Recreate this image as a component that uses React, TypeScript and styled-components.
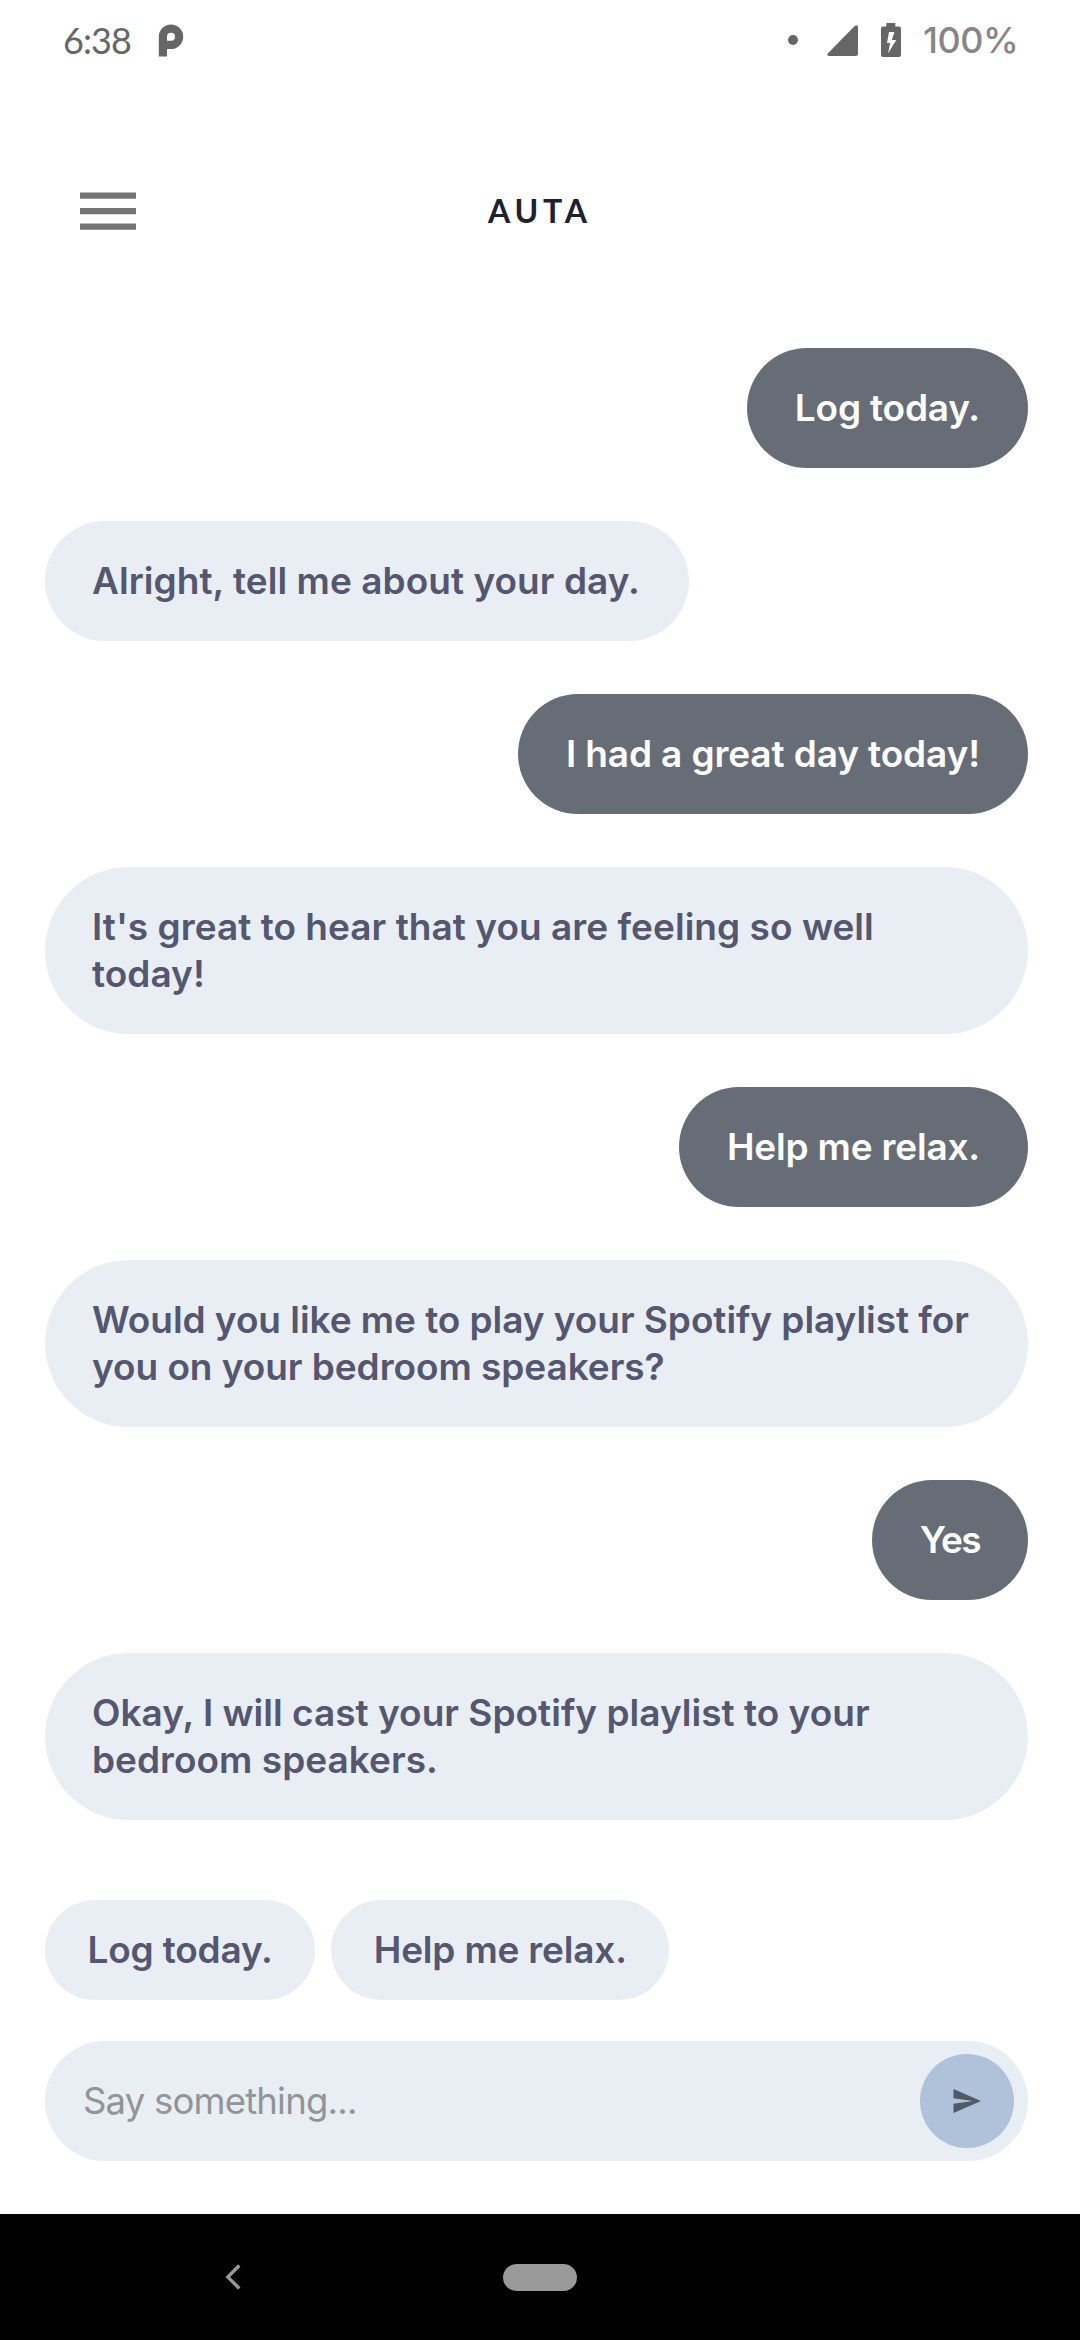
import React from 'react';
import styled, { createGlobalStyle } from 'styled-components';

const GlobalStyle = createGlobalStyle`
  * { box-sizing: border-box; }
  body { margin: 0; background: #fff; font-family: Inter, Roboto, sans-serif; }
`;

const Screen = styled.div`
  width: 1080px;
  height: 2340px;
  display: flex;
  flex-direction: column;
  background: #fff;
  overflow: hidden;
`;

const StatusBar = styled.div`
  height: 80px;
  flex: none;
  display: flex;
  align-items: center;
  justify-content: space-between;
  padding: 0 60px 0 63px;
`;

const StatusGroup = styled.div`
  display: flex;
  align-items: center;
  height: 80px;
`;

const Clock = styled.span`
  width: 95px;
  font: 400 36px/79px Lato, sans-serif;
  letter-spacing: -0.9px;
  color: #666;
`;

const BatteryLevel = styled.span`
  width: 97px;
  margin-left: 22px;
  font-size: 36px;
  font-weight: 500;
  line-height: 82px;
  letter-spacing: -0.5px;
  white-space: nowrap;
  color: #868686;
`;

const Notice = styled.i`
  width: 10px;
  height: 10px;
  border-radius: 50%;
  background: #666;
  margin-right: 29px;
`;

const Header = styled.header`
  height: 268px;
  flex: none;
  display: grid;
  grid-template-columns: 200px 1fr 200px;
  align-items: center;
  padding: 0 80px 6px;
`;

const MenuButton = styled.button`
  width: 56px;
  height: 38px;
  padding: 0;
  border: 0;
  background: none;
  display: flex;
`;

const Title = styled.h1`
  margin: 0;
  text-align: center;
  font: 700 32px/40px Lato, sans-serif;
  letter-spacing: 4.8px;
  color: #20202e;
`;

const Conversation = styled.main`
  height: 1552px;
  flex: none;
  display: flex;
  flex-direction: column;
  align-items: flex-start;
  gap: 53px;
  padding: 0 52px 0 45px;
`;

const Bubble = styled.div<{ $mine?: boolean; $tracking: number; $wide?: boolean }>`
  align-self: ${p => (p.$mine ? 'flex-end' : 'flex-start')};
  width: ${p => (p.$wide ? '983px' : 'auto')};
  padding: ${p => (p.$mine ? '36px 48px 37px' : '36px 49px 37px 47px')};
  border-radius: 84px;
  background: ${p => (p.$mine ? '#666d76' : '#e9eef5')};
  color: ${p => (p.$mine ? '#fff' : '#55566f')};
  font-size: 37px;
  font-weight: 600;
  line-height: 47px;
  letter-spacing: ${p => p.$tracking}px;
  white-space: pre;
`;

const Suggestions = styled.div`
  height: 141px;
  flex: none;
  display: flex;
  align-items: flex-start;
  gap: 16px;
  padding-left: 45px;
`;

const Chip = styled.button<{ $tracking: number }>`
  height: 100px;
  padding: 0 42.5px;
  border: 0;
  border-radius: 50px;
  background: #e9eef5;
  color: #55566f;
  font: 600 37px/98px Inter, sans-serif;
  letter-spacing: ${p => p.$tracking}px;
`;

const Composer = styled.form`
  height: 120px;
  flex: none;
  margin: 0 52px 53px 45px;
  padding: 0 14px 0 38px;
  border-radius: 60px;
  background: #e9eef5;
  display: flex;
  align-items: center;
  justify-content: space-between;
`;

const Placeholder = styled.span`
  font-size: 36.5px;
  line-height: 47px;
  letter-spacing: -0.8px;
  color: #919498;
`;

const SendButton = styled.button`
  width: 94px;
  height: 94px;
  padding: 0;
  border: 0;
  border-radius: 50%;
  background: #b0c1da;
  display: flex;
  align-items: center;
  justify-content: center;
`;

const NavBar = styled.nav`
  flex: 1;
  display: grid;
  grid-template-columns: 466px 148px 466px;
  align-items: center;
  justify-items: center;
  background: #000;
`;

const HomePill = styled.span`
  width: 74px;
  height: 27px;
  border-radius: 14px;
  background: #999;
`;

type Message = { text: string; mine?: boolean; wide?: boolean; tracking: number };

const messages: Message[] = [
  { text: 'Log today.', mine: true, tracking: -0.17 },
  { text: 'Alright, tell me about your day.', tracking: 0.05 },
  { text: 'I had a great day today!', mine: true, tracking: -0.11 },
  { text: "It's great to hear that you are feeling so well\ntoday!", wide: true, tracking: 0.04 },
  { text: 'Help me relax.', mine: true, tracking: -0.18 },
  { text: 'Would you like me to play your Spotify playlist for\nyou on your bedroom speakers?', wide: true, tracking: -0.05 },
  { text: 'Yes', mine: true, tracking: -1.6 },
  { text: 'Okay, I will cast your Spotify playlist to your\nbedroom speakers.', wide: true, tracking: 0.02 },
];

export default function App() {
  return (
    <Screen>
      <GlobalStyle />
      <StatusBar>
        <StatusGroup>
          <Clock>6:38</Clock>
          <svg width="26" height="33" viewBox="0 0 26 33">
            <path fillRule="evenodd" fill="#666" d="M0.8 32.5V12.7A12.2 12.3 0 1 1 13 25H9v7.5ZM9 16.7h4A4 4 0 1 0 9 12.7Z" />
          </svg>
        </StatusGroup>
        <StatusGroup>
          <Notice />
          <svg width="31" height="31" viewBox="0 0 31 31">
            <path fill="#666" d="M1.2 28 27.7 1q3.3-2 3.3 1.6V29q0 2-2 2H2Q-1 30.5 1.2 28Z" />
          </svg>
          <svg width="20" height="34" viewBox="0 0 20 34" style={{ marginLeft: 23 }}>
            <path fillRule="evenodd" fill="#666" d="M5.3 0h9v3.4H18q2 0 2 2V32q0 2-2 2H2q-2 0-2-2V5.4q0-2 2-2h3.3ZM8 9 6 20h3.2L7 30.5 15.3 17h-4.5L13.5 9Z" />
          </svg>
          <BatteryLevel>100%</BatteryLevel>
        </StatusGroup>
      </StatusBar>
      <Header>
        <MenuButton aria-label="Menu">
          <svg width="56" height="38" viewBox="0 0 56 38">
            <path fill="#757575" d="M0 .4h56v6.3H0ZM0 15.9h56v6.3H0ZM0 31.4h56v6.3H0Z" />
          </svg>
        </MenuButton>
        <Title>AUTA</Title>
      </Header>
      <Conversation>
        {messages.map(m => (
          <Bubble key={m.text} $mine={m.mine} $wide={m.wide} $tracking={m.tracking}>{m.text}</Bubble>
        ))}
      </Conversation>
      <Suggestions>
        <Chip $tracking={-0.17}>Log today.</Chip>
        <Chip $tracking={-0.18}>Help me relax.</Chip>
      </Suggestions>
      <Composer>
        <Placeholder>Say something...</Placeholder>
        <SendButton type="button" aria-label="Send">
          <svg width="28" height="24" viewBox="0 0 28 24">
            <path fill="#515a66" d="M.5 0 28 12 .5 24V14.8L20 12 .5 9.2Z" />
          </svg>
        </SendButton>
      </Composer>
      <NavBar>
        <svg width="16" height="26" viewBox="0 0 16 26">
          <path fill="none" stroke="#999" strokeWidth="3.3" d="M14.3 1.5 2.8 13l11.5 11.5" />
        </svg>
        <HomePill />
      </NavBar>
    </Screen>
  );
}
